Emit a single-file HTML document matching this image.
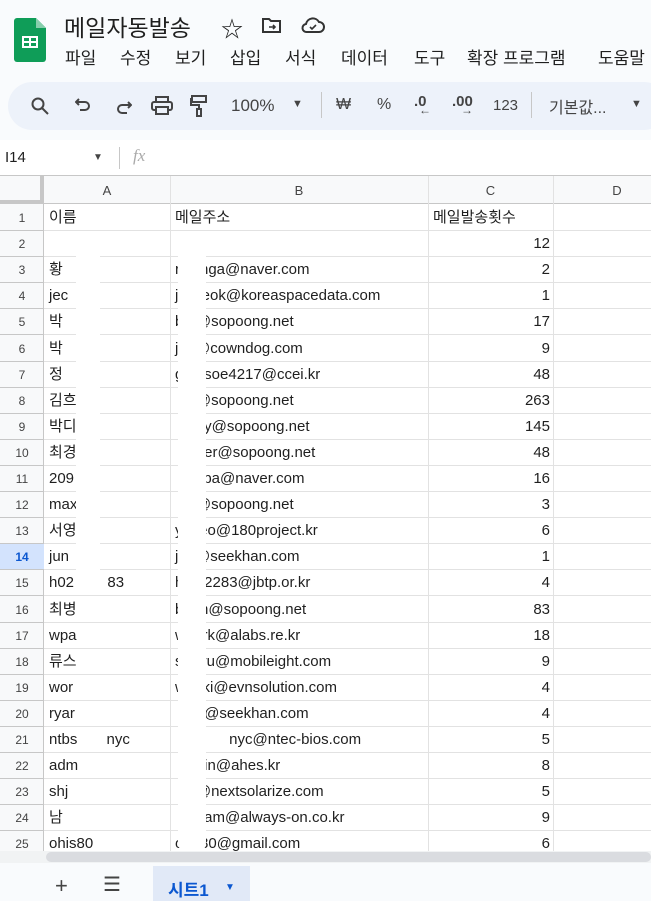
<!DOCTYPE html>
<html><head><meta charset="utf-8">
<style>
*{margin:0;padding:0;box-sizing:border-box}
body{width:651px;height:901px;overflow:hidden;background:#f9fbfd;font-family:"Liberation Sans","Noto Sans CJK KR",sans-serif;position:relative;color:#1f1f1f}
.a{position:absolute;white-space:nowrap}
.grid{position:absolute;left:0;top:176px;width:651px;height:676px;background:#fff;overflow:hidden}
.cell{position:absolute;font-size:15px;line-height:26px;white-space:nowrap}
.rh{position:absolute;left:0;width:44px;text-align:center;font-size:12px;color:#444;line-height:26px}
.hl{position:absolute;height:1px;background:#e2e2e2;left:0;width:651px}
.vl{position:absolute;width:1px;background:#e2e2e2;top:0;height:676px}
.m{position:absolute;top:44px;font-size:17px}
</style></head><body>
<svg class="a" style="left:14px;top:18px" width="32" height="44" viewBox="0 0 32 44"><path d="M3 0h19l10 10v31a3 3 0 0 1-3 3H3a3 3 0 0 1-3-3V3a3 3 0 0 1 3-3z" fill="#0f9d58"/><path d="M22 0l10 10H22z" fill="#87ceac"/><rect x="8" y="18" width="16" height="12" fill="#fff"/><rect x="10" y="20" width="5" height="3" fill="#0f9d58"/><rect x="17" y="20" width="5" height="3" fill="#0f9d58"/><rect x="10" y="25" width="5" height="3" fill="#0f9d58"/><rect x="17" y="25" width="5" height="3" fill="#0f9d58"/></svg>
<div class="a" style="left:64px;top:9px;font-size:23px">메일자동발송</div>
<div class="a" style="left:221px;top:12px;font-size:22px">☆</div>
<svg class="a" style="left:262px;top:17px" width="20" height="16" viewBox="0 0 20 16"><path d="M1 2h6l2 2h9v11H1z" fill="none" stroke="#333" stroke-width="2"/><path d="M7 10h6m-2-2l2 2-2 2" stroke="#333" stroke-width="1.6" fill="none"/></svg>
<svg class="a" style="left:301px;top:16px" width="24" height="18" viewBox="0 0 24 18"><path d="M6 16h12a5 5 0 0 0 0-10 7 7 0 0 0-13 2 4 4 0 0 0 1 8z" fill="none" stroke="#333" stroke-width="2"/><path d="M9 11l2 2 4-4" stroke="#333" stroke-width="1.6" fill="none"/></svg>
<div class="m" style="left:65px">파일</div><div class="m" style="left:120px">수정</div><div class="m" style="left:175px">보기</div><div class="m" style="left:230px">삽입</div><div class="m" style="left:285px">서식</div><div class="m" style="left:341px">데이터</div><div class="m" style="left:414px">도구</div><div class="m" style="left:467px">확장 프로그램</div><div class="m" style="left:598px">도움말</div>
<div class="a" style="left:8px;top:82px;width:660px;height:48px;background:#edf2fa;border-radius:24px"></div>
<svg class="a" style="left:30px;top:96px" width="20" height="20" viewBox="0 0 20 20"><circle cx="8" cy="8" r="5.5" fill="none" stroke="#444" stroke-width="2"/><path d="M12 12l6 6" stroke="#444" stroke-width="2"/></svg>
<svg class="a" style="left:75px;top:97px" width="18" height="18" viewBox="0 0 18 18"><path d="M4 2L1 5l3 3M1 5h9a4 4 0 0 1 0 8H5" fill="none" stroke="#444" stroke-width="2"/></svg>
<svg class="a" style="left:114px;top:97px" width="18" height="18" viewBox="0 0 18 18"><path d="M14 5l3 3-3 3M17 8H8a4 4 0 0 0 0 8h5" fill="none" stroke="#444" stroke-width="2"/></svg>
<svg class="a" style="left:151px;top:96px" width="22" height="20" viewBox="0 0 22 20"><rect x="5" y="1" width="12" height="5" fill="none" stroke="#444" stroke-width="2"/><rect x="1" y="6" width="20" height="8" rx="2" fill="none" stroke="#444" stroke-width="2"/><rect x="5" y="11" width="12" height="7" fill="#edf2fa" stroke="#444" stroke-width="2"/></svg>
<svg class="a" style="left:190px;top:95px" width="18" height="22" viewBox="0 0 18 22"><rect x="2" y="1" width="14" height="6" fill="none" stroke="#444" stroke-width="2"/><path d="M2 4H1v6h8v4" fill="none" stroke="#444" stroke-width="2"/><rect x="7" y="14" width="4" height="7" fill="none" stroke="#444" stroke-width="2"/></svg>
<div class="a" style="left:231px;top:96px;font-size:17px;color:#444">100%</div>
<div class="a" style="left:292px;top:98px;font-size:11px;color:#444">▼</div>
<div class="a" style="left:321px;top:92px;width:1px;height:26px;background:#c7c7c7"></div>
<div class="a" style="left:336px;top:96px;font-size:16px;color:#444">₩</div>
<div class="a" style="left:377px;top:96px;font-size:16px;color:#444">%</div>
<div class="a" style="left:414px;top:93px;font-size:15px;color:#444;font-weight:bold">.0</div>
<div class="a" style="left:419px;top:103px;font-size:12px;color:#444">←</div>
<div class="a" style="left:452px;top:93px;font-size:15px;color:#444;font-weight:bold">.00</div>
<div class="a" style="left:461px;top:103px;font-size:12px;color:#444">→</div>
<div class="a" style="left:493px;top:97px;font-size:15px;color:#444">123</div>
<div class="a" style="left:531px;top:92px;width:1px;height:26px;background:#c7c7c7"></div>
<div class="a" style="left:549px;top:94px;font-size:16px;color:#444">기본값...</div>
<div class="a" style="left:631px;top:98px;font-size:11px;color:#444">▼</div>
<div class="a" style="left:0;top:140px;width:651px;height:36px;background:#fff;border-bottom:1px solid #c7c7c7"></div>
<div class="a" style="left:5px;top:149px;font-size:15px">I14</div>
<div class="a" style="left:93px;top:152px;font-size:10px;color:#444">▼</div>
<div class="a" style="left:119px;top:147px;width:1px;height:22px;background:#c7c7c7"></div>
<div class="a" style="left:133px;top:146px;font-size:17px;color:#aaa;font-style:italic;font-family:'Liberation Serif',serif">fx</div>
<div class="grid">
 <div class="a" style="left:0;top:0;width:651px;height:28px;background:#f8f9fa;border-bottom:1px solid #c7c7c7"></div>
 <div class="a" style="left:0;top:0;width:44px;height:676px;background:#f8f9fa;border-right:1px solid #c7c7c7"></div>
 <div class="a" style="left:0;top:0;width:44px;height:28px;background:#f8f9fa;border-right:4px solid #c7c7c7;border-bottom:4px solid #c7c7c7"></div>
 <div class="a" style="left:170px;top:0;width:1px;height:28px;background:#c7c7c7"></div>
 <div class="a" style="left:428px;top:0;width:1px;height:28px;background:#c7c7c7"></div>
 <div class="a" style="left:553px;top:0;width:1px;height:28px;background:#c7c7c7"></div>
 <div class="a" style="left:44px;width:126px;top:7px;text-align:center;font-size:13px;color:#444">A</div>
 <div class="a" style="left:170px;width:258px;top:7px;text-align:center;font-size:13px;color:#444">B</div>
 <div class="a" style="left:428px;width:125px;top:7px;text-align:center;font-size:13px;color:#444">C</div>
 <div class="a" style="left:553px;width:128px;top:7px;text-align:center;font-size:13px;color:#444">D</div>
 <div class="vl" style="left:170px"></div><div class="vl" style="left:428px"></div><div class="vl" style="left:553px"></div>
 <div id="rows"></div>
</div>
<script>
var d=[["이름","메일주소","메일발송횟수"],["","","12"],["황","r   :inga@naver.com","2"],["jec","j   jseok@koreaspacedata.com","1"],["박","b   @sopoong.net","17"],["박","j   /@cowndog.com","9"],["정","g   usoe4217@ccei.kr","48"],["김흐","    /@sopoong.net","263"],["박디","     ny@sopoong.net","145"],["최경","     per@sopoong.net","48"],["209","     cpa@naver.com","16"],["max","     @sopoong.net","3"],["서영","y    eo@180project.kr","6"],["jun","j    @seekhan.com","1"],["h02        83","h   42283@jbtp.or.kr","4"],["최병","b    n@sopoong.net","83"],["wpa","w    rk@alabs.re.kr","18"],["류스","s    yu@mobileight.com","9"],["wor","w    ki@evnsolution.com","4"],["ryar","     n@seekhan.com","4"],["ntbs       nyc","             nyc@ntec-bios.com","5"],["adm","     nin@ahes.kr","8"],["shj","     @nextsolarize.com","5"],["남","     nam@always-on.co.kr","9"],["ohis80","o    80@gmail.com","6"]];
var h="";
for(var i=0;i<d.length;i++){var t=29+i*26.1;
h+='<div class="rh" style="top:'+t+'px;'+(i==13?'background:#d3e3fd;font-weight:bold;color:#0b57d0;':'')+'">'+(i+1)+'</div>';
h+='<div class="hl" style="top:'+(t+25)+'px;left:44px"></div><div class="hl" style="top:'+(t+25)+'px;width:44px;background:#c7c7c7"></div>';
h+='<div class="cell" style="left:49px;top:'+t+'px;white-space:pre">'+d[i][0]+'</div>';
h+='<div class="cell" style="left:175px;top:'+t+'px;white-space:pre">'+d[i][1]+'</div>';
h+='<div class="cell" style="left:428px;width:122px;text-align:'+(i==0?'left;padding-left:5px':'right')+';top:'+t+'px">'+d[i][2]+'</div>';}
document.getElementById('rows').innerHTML=h;
</script>
<div class="a" style="left:76px;top:256px;width:24px;height:330px;background:#fff"></div>
<div class="a" style="left:178px;top:256px;width:28px;height:600px;background:#fff;border-radius:0 0 14px 14px"></div>
<div class="a" style="left:0;top:851px;width:651px;height:12px;background:#f1f3f4"></div>
<div class="a" style="left:46px;top:852px;width:605px;height:10px;background:#dadce0;border-radius:5px"></div>
<div class="a" style="left:0;top:864px;width:651px;height:37px;background:#f9fbfd"></div>
<div class="a" style="left:55px;top:873px;font-size:22px;color:#444">+</div>
<div class="a" style="left:103px;top:872px;font-size:20px;color:#444">☰</div>
<div class="a" style="left:153px;top:866px;width:97px;height:35px;background:#e1e9f7"></div>
<div class="a" style="left:168px;top:876px;font-size:17px;color:#0b57d0;font-weight:bold">시트1</div>
<div class="a" style="left:225px;top:882px;font-size:10px;color:#0b57d0">▼</div>
</body></html>
